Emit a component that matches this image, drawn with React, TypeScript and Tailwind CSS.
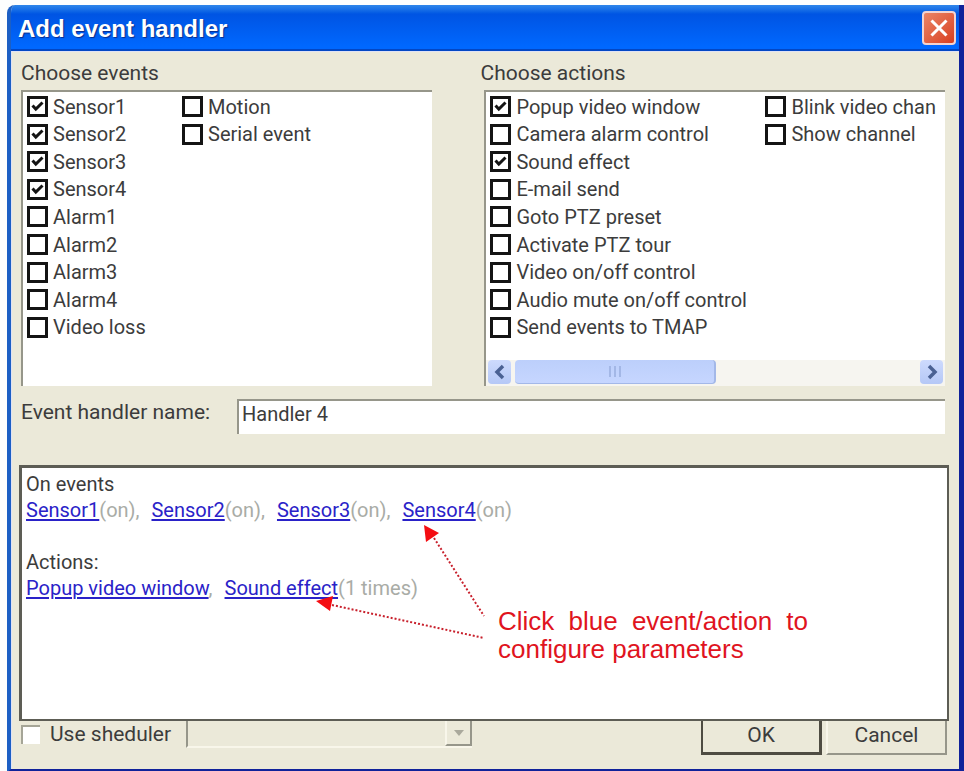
import { useState } from "react";
import type { ReactNode } from "react";

type Option = { id: string; label: string; checked?: boolean };

const eventOptions: Option[] = [
  { id: "sensor1", label: "Sensor1", checked: true },
  { id: "sensor2", label: "Sensor2", checked: true },
  { id: "sensor3", label: "Sensor3", checked: true },
  { id: "sensor4", label: "Sensor4", checked: true },
  { id: "alarm1", label: "Alarm1" },
  { id: "alarm2", label: "Alarm2" },
  { id: "alarm3", label: "Alarm3" },
  { id: "alarm4", label: "Alarm4" },
  { id: "video-loss", label: "Video loss" },
  { id: "motion", label: "Motion" },
  { id: "serial", label: "Serial event" },
];

const actionOptions: Option[] = [
  { id: "popup", label: "Popup video window", checked: true },
  { id: "camera-alarm", label: "Camera alarm control" },
  { id: "sound", label: "Sound effect", checked: true },
  { id: "email", label: "E-mail send" },
  { id: "ptz-preset", label: "Goto PTZ preset" },
  { id: "ptz-tour", label: "Activate PTZ tour" },
  { id: "video-control", label: "Video on/off control" },
  { id: "audio-control", label: "Audio mute on/off control" },
  { id: "tmap", label: "Send events to TMAP" },
  { id: "blink", label: "Blink video chan" },
  { id: "show", label: "Show channel" },
];

const sensors = ["Sensor1", "Sensor2", "Sensor3", "Sensor4"];

function CheckItem({ option }: { option: Option }) {
  const [checked, setChecked] = useState(Boolean(option.checked));

  return (
    <label className="flex items-center gap-[5px] whitespace-nowrap">
      <span className="grid shrink-0 place-items-center">
        <input
          checked={checked}
          className="peer col-start-1 row-start-1 size-[21px] appearance-none border-[3px] border-[#141414] bg-white"
          onChange={(event) => setChecked(event.target.checked)}
          type="checkbox"
        />
        <svg aria-hidden="true" className="pointer-events-none invisible col-start-1 row-start-1 size-[13px] peer-checked:visible" viewBox="0 0 13 13">
          <path d="M1.5 5.5 4.8 9 11.5 2.5" fill="none" stroke="#141414" strokeWidth="3" />
        </svg>
      </span>
      <span>{option.label}</span>
    </label>
  );
}

function OptionList({ options, columns }: { options: Option[]; columns: string }) {
  return <div className={`grid h-[248px] grid-flow-col grid-rows-9 ${columns}`}>{options.map((option) => <CheckItem key={option.id} option={option} />)}</div>;
}

function ScrollButton({ label, d }: { label: string; d: string }) {
  return (
    <button aria-label={label} className="grid h-6 w-[23px] place-items-center rounded-sm bg-linear-to-b from-[#cddafd] to-[#b5c8f6]" type="button">
      <svg className="size-4" viewBox="0 0 16 16">
        <path d={d} fill="none" stroke="#4a6193" strokeWidth="3.5" />
      </svg>
    </button>
  );
}

function LogLink({ children }: { children: ReactNode }) {
  return (
    <a className="text-[#2a22c8] underline decoration-2 underline-offset-2" href="#configure">
      {children}
    </a>
  );
}

export default function App() {
  const [name, setName] = useState("Handler 4");

  return (
    <div className="bg-[#fdfefe] pt-[5px] pl-[7px] font-['Roboto','Liberation_Sans',sans-serif] text-[20px] leading-[26px] text-[#3c3c3c]">
      <div className="overflow-hidden rounded-tl-lg border-r-[5px] border-b-[3px] border-l-4 border-[#10229a] border-l-[#1c5fc4] bg-[#ebe9d9]">
        <header className="-ml-1 flex h-[46px] items-center justify-between bg-linear-to-b from-[#2f86ea] from-0% via-[#0054e3] via-20% to-[#0068ff] to-90% pr-[3px] pl-[11px] shadow-[inset_0_-2px_0_#0347c4]">
          <h1 className="pt-[2px] font-['Liberation_Sans',sans-serif] text-[24px] leading-7 font-bold text-white [text-shadow:1px_1px_1px_#0a2d8c]">Add event handler</h1>
          <button aria-label="Close" className="grid size-[34px] place-items-center rounded border-2 border-[#f3d3d0] bg-linear-to-br from-[#ea8466] to-[#d83c1c]" type="button">
            <svg className="size-5" viewBox="0 0 20 20">
              <path d="M2.5 2.5 17.5 17.5M17.5 2.5 2.5 17.5" stroke="#fff" strokeWidth="3" />
            </svg>
          </button>
        </header>

        <main className="border-t border-l border-[#dfe2f5] pt-2 pr-[10px] pb-[14px] pl-[7px]">
          <div className="grid grid-cols-[411fr_464fr] gap-12 pr-1 pl-[2px]">
            <section>
              <h2 className="pb-1 text-[21px] leading-[26px]">Choose events</h2>
              <div className="h-[296px] overflow-hidden border-t-2 border-l-2 border-[#96968a] bg-white pt-px pl-1">
                <OptionList columns="grid-cols-[155px_1fr]" options={eventOptions} />
              </div>
            </section>
            <section>
              <h2 className="pb-1 text-[21px] leading-[26px]">Choose actions</h2>
              <div className="ml-1 flex h-[296px] flex-col justify-between overflow-hidden border-t-2 border-l-2 border-[#96968a] bg-white pt-px">
                <div className="overflow-hidden pl-1">
                  <OptionList columns="grid-cols-[275px_1fr]" options={actionOptions} />
                </div>
                <div className="flex h-[26px] items-start gap-1 bg-[#f6f5f0] pr-[2px] pl-[2px]">
                  <ScrollButton d="M11 2 5 8l6 6" label="Scroll left" />
                  <div className="flex-1">
                    <div className="flex h-6 w-1/2 items-center justify-center gap-[3px] rounded-sm border-r-2 border-b border-[#a3b8e8] bg-linear-to-b from-[#bccffb] to-[#c6d6ff]">
                      <span className="h-[11px] w-[2px] bg-[#a3b7e6]" />
                      <span className="h-[11px] w-[2px] bg-[#a3b7e6]" />
                      <span className="h-[11px] w-[2px] bg-[#a3b7e6]" />
                    </div>
                  </div>
                  <ScrollButton d="M5 2l6 6-6 6" label="Scroll right" />
                </div>
              </div>
            </section>
          </div>

          <div className="flex items-start gap-6 pt-[13px] pr-1 pl-[2px]">
            <label className="w-[192px] shrink-0 text-[21px] leading-[26px] whitespace-nowrap" htmlFor="handler-name">
              Event handler name:
            </label>
            <input
              className="h-[35px] min-w-0 flex-1 border-t-2 border-l-2 border-[#96968a] bg-white pb-[7px] pl-[3px] outline-none"
              id="handler-name"
              onChange={(event) => setName(event.target.value)}
              value={name}
            />
          </div>

          <section className="relative mt-[31px] min-h-[256px] border-t-[3px] border-r-2 border-b-2 border-l-[3px] border-[#5d5d55] bg-white pt-[3px] pl-1">
            <p>On events</p>
            <p className="flex flex-wrap gap-x-3 text-[#a9aca6]">
              {sensors.map((sensor, index) => (
                <span key={sensor}>
                  <LogLink>{sensor}</LogLink>(on){index < sensors.length - 1 ? "," : ""}
                </span>
              ))}
            </p>
            <p className="pt-[26px]">Actions:</p>
            <p className="flex flex-wrap gap-x-3 text-[#a9aca6]">
              <span>
                <LogLink>Popup video window</LogLink>,
              </span>
              <span>
                <LogLink>Sound effect</LogLink>(1 times)
              </span>
            </p>
            <svg aria-hidden="true" className="pointer-events-none absolute top-[57px] left-[294px] h-[120px] w-[180px]" viewBox="0 0 180 120">
              <g fill="none" stroke="#c8202c" strokeDasharray="2 2" strokeWidth="2">
                <path d="M118 13 168 91" />
                <path d="M16 80 168 113" />
              </g>
              <path d="M108 0 123 8 110 17ZM0 76 17 71 14 86Z" fill="#f40d12" />
            </svg>
            <p className="absolute top-[139px] left-[476px] w-[310px] text-justify font-['Liberation_Sans',sans-serif] text-[26px] leading-7 text-[#e0141e]">
              Click blue event/action to configure parameters
            </p>
          </section>

          <footer className="flex items-start text-[21px] leading-[26px]">
            <label className="flex w-[167px] shrink-0 items-center gap-[10px] pl-[2px] whitespace-nowrap">
              <input className="size-[19px] appearance-none border-t-2 border-l-2 border-[#a5a597] bg-white" type="checkbox" />
              Use sheduler
            </label>
            <div className="grid w-[286px] items-start">
              <select aria-label="Schedule" className="col-start-1 row-start-1 h-[27px] w-full appearance-none border-b-2 border-l-2 border-b-[#f8f6ea] border-l-[#96968a]" disabled />
              <span className="pointer-events-none col-start-1 row-start-1 grid h-[25px] w-[27px] place-items-center justify-self-end border-r-2 border-b-2 border-l-2 border-[#96968a] border-l-[#f8f6ea]">
                <svg className="h-[6px] w-[10px]" viewBox="0 0 10 6">
                  <path d="M0 0h10L5 6Z" fill="#aaa99c" />
                </svg>
              </span>
            </div>
            <div className="ml-auto flex gap-1 pr-[2px]">
              <button className="h-[34px] w-[121px] border-r-[3px] border-b-[3px] border-l-2 border-[#4e4c42] pb-1" type="button">
                OK
              </button>
              <button className="h-[34px] w-[121px] border-r-2 border-b-2 border-l-2 border-[#96968a] border-l-[#f8f6ea] pb-1" type="button">
                Cancel
              </button>
            </div>
          </footer>
        </main>
      </div>
    </div>
  );
}
